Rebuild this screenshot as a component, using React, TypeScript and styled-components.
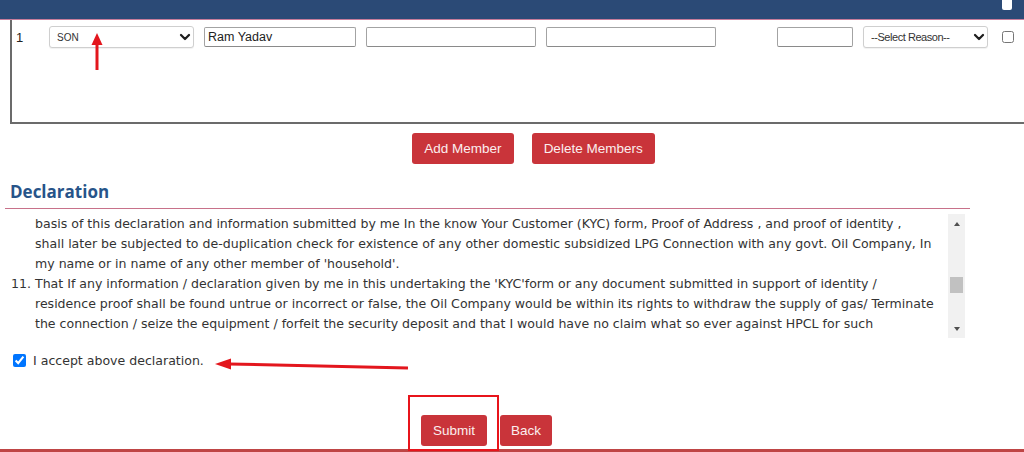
import { useLayoutEffect, useRef } from "react";
import styled, { createGlobalStyle } from "styled-components";
import { ChevronDown } from "lucide-react";

const GlobalStyle = createGlobalStyle`
  body {
    margin: 0;
    background: #fff;
    font-family: "Liberation Sans", Arial, sans-serif;
  }
`;

const Page = styled.div`
  position: relative;
  width: 1024px;
  height: 452px;
  overflow: hidden;
  display: flex;
  flex-direction: column;
`;

const HeaderBar = styled.div`
  height: 19px;
  background: #2b4a76;
  border-bottom: 1px solid #c77d9b;
  display: flex;
  justify-content: flex-end;
  flex-shrink: 0;
`;

const HeaderCheck = styled.div`
  width: 10px;
  height: 10px;
  margin-right: 12px;
  background: #fff;
  border-radius: 0 0 2px 2px;
`;

const MemberBox = styled.div`
  margin-left: 10px;
  height: 102px;
  border-left: 2px solid #6b6b6b;
  border-bottom: 2px solid #6b6b6b;
  flex-shrink: 0;
`;

const MemberRow = styled.div`
  display: grid;
  grid-template-columns: 23px 145px 152px 170px 170px 41px 76px 125px 20px;
  column-gap: 10px;
  align-items: center;
  padding: 6px 0 0 4px;
  height: 22px;
`;

const RowNumber = styled.span`
  font-size: 13px;
  color: #222;
`;

const SelectWrap = styled.div`
  position: relative;
  height: 22px;

  svg {
    position: absolute;
    right: 1px;
    top: 3px;
    pointer-events: none;
    color: #1e1e1e;
  }
`;

const Select = styled.select<{ $size: number; $narrow?: boolean }>`
  appearance: none;
  width: 100%;
  height: 22px;
  border: 1px solid #cfcfcf;
  border-radius: 3px;
  background: #fff;
  padding: 0 0 0 7px;
  font-family: "Liberation Sans", Arial, sans-serif;
  font-size: ${(p) => p.$size}px;
  letter-spacing: ${(p) => (p.$narrow ? "-0.45px" : "0")};
  color: #333;
  box-shadow: 0 1px 1px rgba(0, 0, 0, 0.06);
`;

const TextInput = styled.input`
  box-sizing: border-box;
  width: 100%;
  height: 20px;
  border: 1px solid #a3a3a3;
  border-bottom-color: #8a8a8a;
  border-radius: 2px;
  padding: 0 3px;
  font-family: "Liberation Sans", Arial, sans-serif;
  font-size: 12.5px;
  color: #222;
`;

const RowCheck = styled.input`
  margin: 0 0 0 4px;
  width: 12px;
  height: 12px;
`;

const ButtonRow = styled.div<{ $pad: number; $gap: number; $top: number }>`
  display: flex;
  gap: ${(p) => p.$gap}px;
  padding-left: ${(p) => p.$pad}px;
  margin-top: ${(p) => p.$top}px;
  flex-shrink: 0;
`;

const ButtonRowCentered = styled(ButtonRow)`
  justify-content: center;
`;

const RedButton = styled.button<{ $px: number }>`
  height: 31px;
  padding: 0 ${(p) => p.$px}px;
  border: none;
  border-radius: 3px;
  background: #c9343a;
  color: #fbeeee;
  font-family: "Liberation Sans", Arial, sans-serif;
  font-size: 13.5px;
`;

const Section = styled.div`
  margin: 16px 0 0 5px;
  width: 965px;
  flex-shrink: 0;
`;

const SectionTitle = styled.h2`
  margin: 0;
  height: 24px;
  padding: 0 0 4px 5px;
  border-bottom: 1px solid #c8718a;
  font-family: "Open Sans", sans-serif;
  font-size: 17px;
  font-weight: 700;
  line-height: 24px;
  color: #275489;
`;

const ScrollFrame = styled.div`
  display: flex;
  margin-top: 4px;
  width: 960px;
  height: 127px;
`;

const ScrollBox = styled.div`
  position: relative;
  flex: 1;
  align-self: flex-start;
  height: 122px;
  overflow: hidden;
  font-family: "DejaVu Sans", Verdana, sans-serif;
  font-size: 12.55px;
  line-height: 20px;
  color: #333;
`;

const ScrollRail = styled.div`
  width: 17px;
  margin: 1px 0 2px;
  background: #f1f1f1;
  display: flex;
  flex-direction: column;
  align-items: center;
`;

const RailArrow = styled.div<{ $down?: boolean }>`
  width: 0;
  height: 0;
  border-left: 3.5px solid transparent;
  border-right: 3.5px solid transparent;
  ${(p) =>
    p.$down
      ? "border-top: 4px solid #505050; margin: auto 0 7px;"
      : "border-bottom: 4px solid #505050; margin-top: 8px;"}
`;

const RailThumb = styled.div`
  width: 13px;
  height: 16px;
  margin-top: 51px;
  background: #c1c1c1;
`;

const DeclList = styled.ol`
  margin: 0;
  padding: 0 0 0 30px;

  li {
    margin: 0;
  }
`;

const LineMarker = styled.span`
  display: inline-block;
  width: 0;
  height: 20px;
  vertical-align: top;
`;

const AcceptRow = styled.label`
  display: flex;
  align-items: center;
  gap: 7px;
  margin: 13px 0 0 13px;
  width: max-content;
  font-family: "DejaVu Sans", Verdana, sans-serif;
  font-size: 12.55px;
  color: #333;
  flex-shrink: 0;

  input {
    margin: 0;
    width: 13px;
    height: 13px;
  }
`;

const BottomLine = styled.div`
  margin-top: auto;
  height: 3px;
  background: #bf4545;
  flex-shrink: 0;
`;

const Annotations = styled.svg`
  position: absolute;
  left: 0;
  top: 0;
  pointer-events: none;
`;

const items: string[] = [
  "That I am a resident of India and have been residing at the address mentioned in the KYC form, and the details furnished by me in the application are true and correct to the best of my knowledge and belief.",
  "That neither I nor any member of my household, as defined in the KYC form, has any domestic LPG connection from any Oil Company i.e. Indian Oil Corporation, Bharat Petroleum Corporation or Hindustan Petroleum Corporation.",
  "That I will use the LPG connection only for domestic purposes and shall not use the cylinders for commercial, industrial or any other purpose, nor transfer the connection to any other person.",
  "That I will not keep more than the permitted number of cylinders at my premises and will follow all the safety instructions given by the distributor / Oil Company for the use of LPG.",
  "That I am aware that the cylinders and pressure regulator supplied to me remain the property of the Oil Company and shall be returned at the time of surrender of the connection.",
  "That I shall inform the distributor immediately of any change in my address or in the composition of my household, and shall get the connection transferred or surrendered as applicable.",
  "That I agree to get the mandatory inspection of my LPG installation carried out by the distributor's mechanic at the intervals prescribed by the Oil Company and to pay the charges for it.",
  "That I understand that the subsidy, if any, on domestic LPG cylinders shall be credited to my bank account as per the scheme of the Government of India in force from time to time.",
  "That I authorise the Oil Company to share the details furnished by me with other Oil Companies and Government agencies for the purpose of de-duplication and verification.",
];

const tail: string[] = [
  "That I shall not tamper with the seal of the cylinder, the pressure regulator or the rubber tube supplied with the connection, and shall report any leakage to the distributor at once.",
  "That I shall produce the original documents submitted with the KYC form for verification as and when required by the distributor or the Oil Company.",
  "That I have read and understood the terms and conditions for the release of a domestic LPG connection and agree to abide by them and by any changes made to them from time to time.",
];

function App() {
  const boxRef = useRef<HTMLDivElement>(null);
  const markRef = useRef<HTMLSpanElement>(null);

  useLayoutEffect(() => {
    if (boxRef.current && markRef.current) {
      boxRef.current.scrollTop = markRef.current.offsetTop - 1;
    }
  }, []);

  return (
    <>
      <GlobalStyle />
      <Page>
        <HeaderBar>
          <HeaderCheck />
        </HeaderBar>

        <MemberBox>
          <MemberRow>
            <RowNumber>1</RowNumber>
            <SelectWrap>
              <Select $size={10} defaultValue="SON">
                <option value="SON">SON</option>
              </Select>
              <ChevronDown size={16} strokeWidth={3.4} />
            </SelectWrap>
            <TextInput defaultValue="Ram Yadav" />
            <TextInput />
            <TextInput />
            <span />
            <TextInput />
            <SelectWrap>
              <Select $size={11} $narrow defaultValue="">
                <option value="">--Select Reason--</option>
              </Select>
              <ChevronDown size={16} strokeWidth={3.4} />
            </SelectWrap>
            <RowCheck type="checkbox" />
          </MemberRow>
        </MemberBox>

        <ButtonRowCentered $pad={43} $gap={18} $top={9}>
          <RedButton $px={12}>Add Member</RedButton>
          <RedButton $px={12}>Delete Members</RedButton>
        </ButtonRowCentered>

        <Section>
          <SectionTitle>Declaration</SectionTitle>
          <ScrollFrame>
            <ScrollBox ref={boxRef}>
              <DeclList>
                {items.map((t) => (
                  <li key={t}>{t}</li>
                ))}
                <li>
                  That I am aware that the LPG connection is being released to
                  me on the
                  <br />
                  <LineMarker ref={markRef} />
                  basis of this declaration and information submitted by me In
                  the know Your Customer (KYC) form, Proof of Address , and
                  proof of identity ,
                  <br />
                  shall later be subjected to de-duplication check for
                  existence of any other domestic subsidized LPG Connection
                  with any govt. Oil Company, In
                  <br />
                  my name or in name of any other member of 'household'.
                </li>
                <li>
                  That If any information / declaration given by me in this
                  undertaking the 'KYC'form or any document submitted in
                  support of identity /
                  <br />
                  residence proof shall be found untrue or incorrect or false,
                  the Oil Company would be within its rights to withdraw the
                  supply of gas/ Terminate
                  <br />
                  the connection / seize the equipment / forfeit the security
                  deposit and that I would have no claim what so ever against
                  HPCL for such
                  <br />
                  termination / withdrawal of supply.
                </li>
                {tail.map((t) => (
                  <li key={t}>{t}</li>
                ))}
              </DeclList>
            </ScrollBox>
            <ScrollRail>
              <RailArrow />
              <RailThumb />
              <RailArrow $down />
            </ScrollRail>
          </ScrollFrame>
        </Section>

        <AcceptRow>
          <input type="checkbox" defaultChecked />
          I accept above declaration.
        </AcceptRow>

        <ButtonRow $pad={421} $gap={13} $top={47}>
          <RedButton $px={12}>Submit</RedButton>
          <RedButton $px={11}>Back</RedButton>
        </ButtonRow>

        <BottomLine />

        <Annotations width="1024" height="452" viewBox="0 0 1024 452">
          <line x1="97" y1="70" x2="97" y2="42" stroke="#e3161d" strokeWidth="3" />
          <polygon points="97,33 91.5,45 102.5,45" fill="#e3161d" />
          <line x1="229" y1="364" x2="408" y2="368" stroke="#e3161d" strokeWidth="3" />
          <polygon points="215,364 231,358.5 231,369.5" fill="#e3161d" />
          <rect x="409" y="396" width="89" height="54" fill="none" stroke="#e8141b" strokeWidth="2" />
        </Annotations>
      </Page>
    </>
  );
}

export default App;
